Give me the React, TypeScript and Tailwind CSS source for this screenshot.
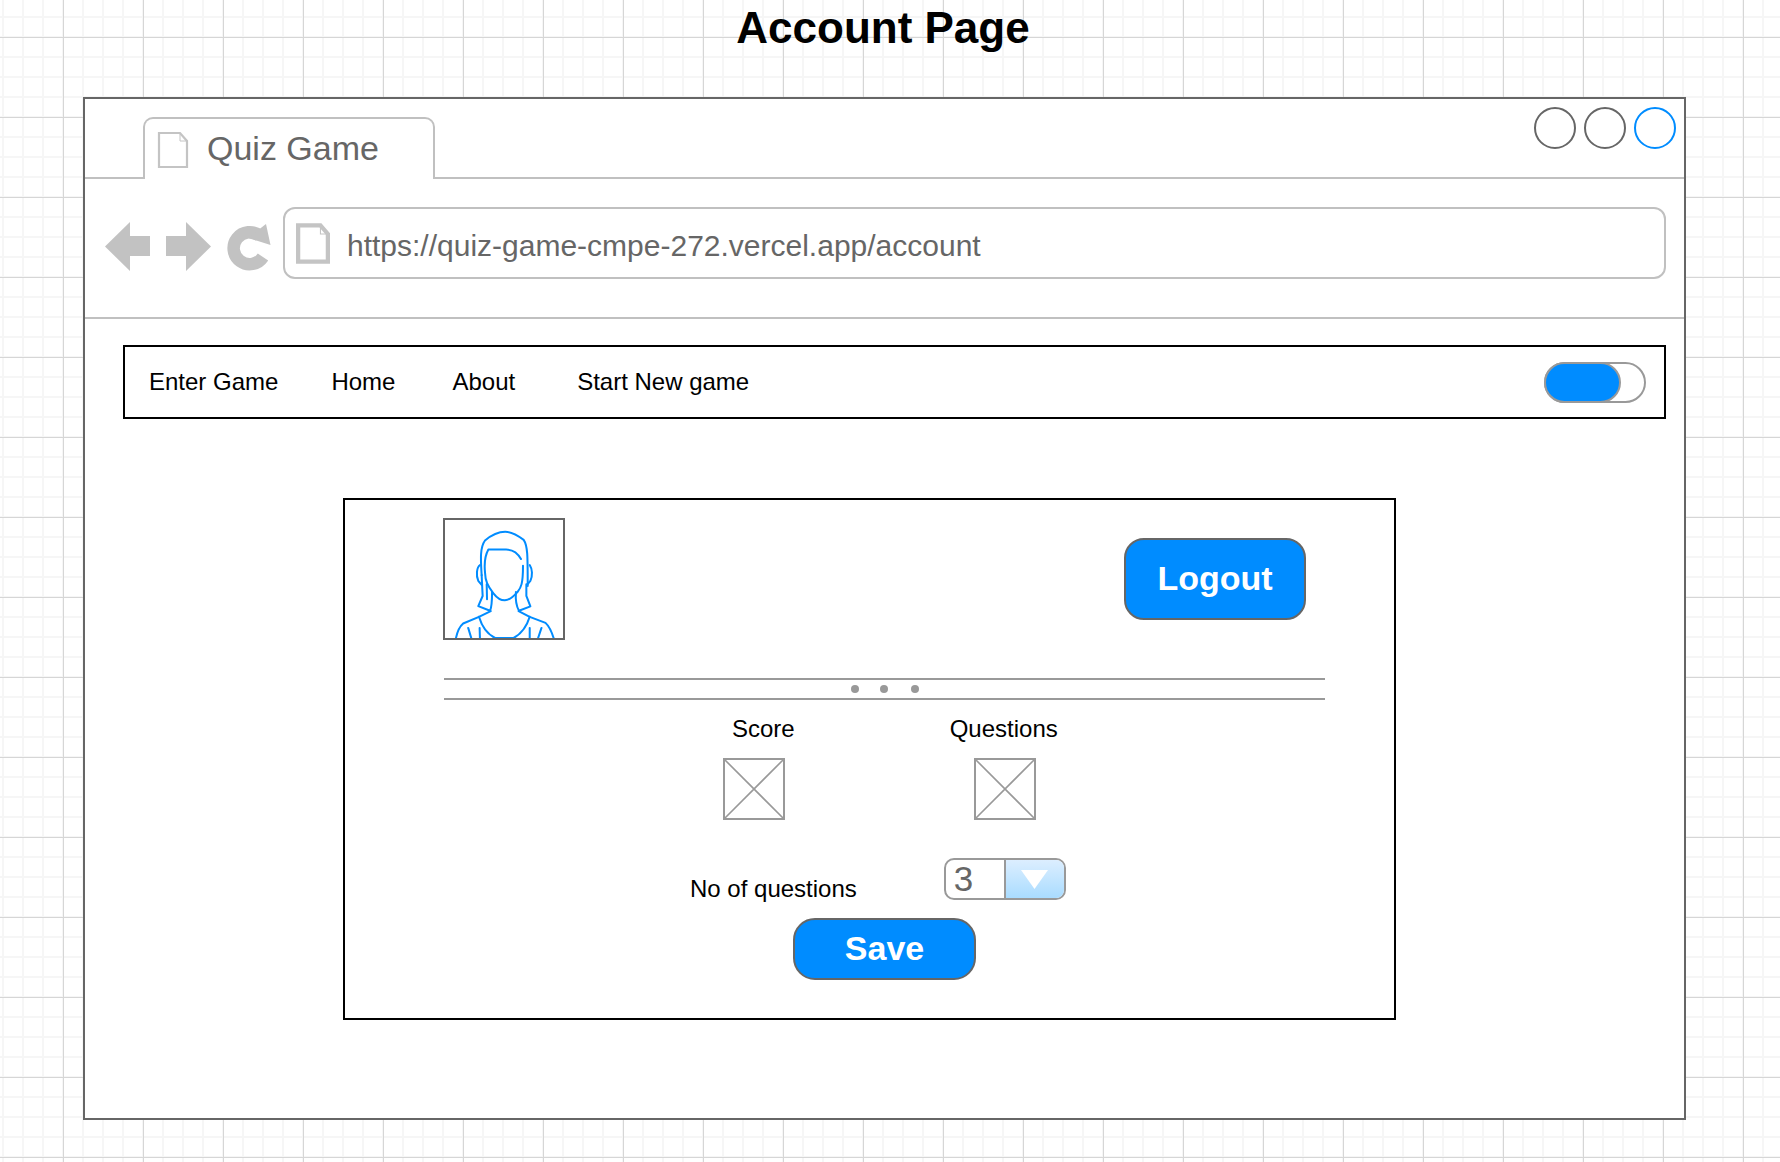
function DocIcon({ className, thick }: { className: string; thick?: boolean }) {
  const sw = thick ? 4 : 2.2
  return (
    <svg viewBox="0 0 32 38" className={className} fill="none" stroke="#c4c4c4" strokeWidth={sw}>
      <path d="M2 2H23L30 10V36H2Z" />
      <path d="M23 2V10H30" strokeWidth={1} />
    </svg>
  )
}

function NavArrows() {
  return (
    <svg viewBox="105 222 166 49" className="mt-[43px] w-[166px] h-[49px] shrink-0" fill="#c2c2c2">
      <path d="M105 246.5L130 222V236H150V256H130V271Z" />
      <path d="M211 246.5L186 222V236H166V256H186V271Z" />
      <path d="M260 236A16 16 0 1 0 263 257" fill="none" stroke="#c2c2c2" strokeWidth="12.5" />
      <path d="M270.5 245L266 224L248 238Z" />
    </svg>
  )
}

function Avatar() {
  const lines = [
    'M155 208C152 160 150 125 165 105C185 88 205 79 225 79C245 79 262 90 280 103C292 120 292 150 292 240',
    'M272 160C262 142 250 132 228 132H175C165 150 163 180 165 200C166 225 172 240 190 262C200 275 212 283 224 283C238 282 250 272 262 258C272 245 278 235 278 180',
    'M170 235L171 280',
    'M155 208L158 270L145 300L180 314C184 305 186 285 186 258',
    'M150 178C140 185 138 210 145 225L155 237',
    'M298 178C306 190 307 210 300 225L290 237',
    'M257 258C255 285 258 300 266 314L300 301L288 270V235',
    'M182 315L147 332L100 352C88 362 82 378 78 398',
    'M265 315L298 332L345 350C358 362 364 378 370 398',
    'M147 332C155 358 168 382 195 395H250C275 382 290 358 298 332',
    'M115 365L125 398',
    'M149 365L150 398',
    'M298 365V398',
    'M333 365L322 398',
  ]
  return (
    <div className="w-[122px] h-[122px] border-2 border-[#666] overflow-hidden shrink-0">
      <svg viewBox="46 44 351 351" className="w-full h-full" fill="none" stroke="#008cff" strokeWidth="6" strokeLinecap="round" strokeLinejoin="round">
        {lines.map(d => <path key={d} d={d} />)}
      </svg>
    </div>
  )
}

function PlaceholderBox() {
  return (
    <svg viewBox="0 0 62 62" className="w-[62px] h-[62px] shrink-0" fill="none" stroke="#999" strokeWidth="1.6">
      <rect x="1" y="1" width="60" height="60" strokeWidth="2" />
      <path d="M1 1L61 61M61 1L1 61" />
    </svg>
  )
}

export default function App() {
  return (
    <div className="w-[1780px] h-[1162px] overflow-hidden bg-white pl-[83px] font-['Liberation_Sans',Arial,sans-serif] bg-[linear-gradient(to_right,#d6d6d6_1px,transparent_1px),linear-gradient(to_bottom,#d6d6d6_1px,transparent_1px),linear-gradient(to_right,#f6f6f6_2px,transparent_2px),linear-gradient(to_bottom,#f6f6f6_2px,transparent_2px)] bg-[size:80px_80px,80px_80px,20px_20px,20px_20px] bg-[position:63px_37px,63px_37px,2px_16px,2px_16px]">
      <h1 className="w-[1600px] h-[97px] pt-[2px] text-center text-[44px] leading-[52px] font-bold text-black">Account Page</h1>

      <div className="w-[1603px] h-[1023px] border-2 border-[#666] bg-white">
        <div className="h-[80px] flex items-start border-b-2 border-[#c0c0c0]">
          <div className="ml-[58px] mt-[18px] w-[292px] h-[62px] flex items-start border-2 border-b-0 border-[#c0c0c0] rounded-t-[10px] bg-white">
            <DocIcon className="w-[32px] h-[38px] ml-[12px] mt-[12px]" />
            <span className="ml-[18px] mt-[9px] text-[34px] leading-[40px] text-[#666]">Quiz Game</span>
          </div>
          <div className="ml-auto mr-[8px] mt-[8px] flex gap-[8px]">
            <div className="w-[42px] h-[42px] rounded-full border-2 border-[#666]" />
            <div className="w-[42px] h-[42px] rounded-full border-2 border-[#666]" />
            <div className="w-[42px] h-[42px] rounded-full border-2 border-[#008cff]" />
          </div>
        </div>

        <div className="h-[140px] pl-[20px] flex items-start border-b-2 border-[#c0c0c0]">
          <NavArrows />
          <div className="mt-[28px] ml-[12px] w-[1383px] h-[72px] flex items-center border-2 border-[#c0c0c0] rounded-[12px]">
            <DocIcon thick className="w-[34px] h-[41px] ml-[11px]" />
            <span className="ml-[17px] pt-[5px] text-[30px] leading-[40px] text-[#666]">https://quiz-game-cmpe-272.vercel.app/account</span>
          </div>
        </div>

        <nav className="ml-[38px] mt-[26px] w-[1543px] h-[74px] pl-[24px] flex items-center border-2 border-black text-[24px] text-black">
          <span>Enter Game</span>
          <span className="ml-[53px]">Home</span>
          <span className="ml-[57px]">About</span>
          <span className="ml-[62px]">Start New game</span>
          <div className="ml-auto mr-[18px] w-[102px] h-[41px] rounded-full border-2 border-[#999]">
            <div className="-ml-[2px] -mt-[2px] w-[77px] h-[41px] rounded-full border-2 border-[#999] bg-[#008cff]" />
          </div>
        </nav>

        <div className="ml-[258px] mt-[79px] w-[1053px] h-[522px] border-2 border-black bg-white">
          <div className="mt-[18px] ml-[98px] mr-[88px] flex items-center justify-between">
            <Avatar />
            <button className="w-[182px] h-[82px] pb-[2px] rounded-[20px] border-2 border-[#666] bg-[#008cff] text-white text-[34px] font-bold">Logout</button>
          </div>

          <div className="mt-[38px] ml-[99px] w-[881px] h-[22px] flex items-center justify-center gap-[22px] border-y-2 border-[#999]">
            <div className="w-[8px] h-[8px] rounded-full bg-[#999]" />
            <div className="w-[8px] h-[8px] rounded-full bg-[#999] -translate-x-[1px]" />
            <div className="w-[8px] h-[8px] rounded-full bg-[#999]" />
          </div>

          <div className="mt-[15px] h-[28px] flex items-center text-[24px] text-black">
            <span className="ml-[387px]">Score</span>
            <span className="ml-[155px]">Questions</span>
          </div>
          <div className="mt-[15px] flex pl-[378px] gap-[189px]">
            <PlaceholderBox />
            <PlaceholderBox />
          </div>

          <div className="mt-[38px] flex items-start">
            <span className="ml-[345px] mt-[15px] text-[24px] leading-[32px] text-black">No of questions</span>
            <div className="ml-[87px] w-[122px] h-[42px] flex border-2 border-[#999] rounded-[10px] overflow-hidden">
              <div className="w-[60px] pl-[8px] text-[35px] leading-[38px] text-[#666] border-r-2 border-[#999]">3</div>
              <div className="flex-1 flex items-center justify-center bg-gradient-to-b from-[#dceeff] to-[#a9dcff]">
                <svg viewBox="0 0 27 19" className="w-[27px] h-[19px]" fill="#fff">
                  <path d="M0 0H27L13.5 19Z" />
                </svg>
              </div>
            </div>
          </div>

          <button className="block mt-[13px] ml-[448px] w-[183px] h-[62px] pb-[1px] rounded-[22px] border-2 border-[#666] bg-[#008cff] text-white text-[34px] font-bold">Save</button>
        </div>
      </div>
    </div>
  )
}
